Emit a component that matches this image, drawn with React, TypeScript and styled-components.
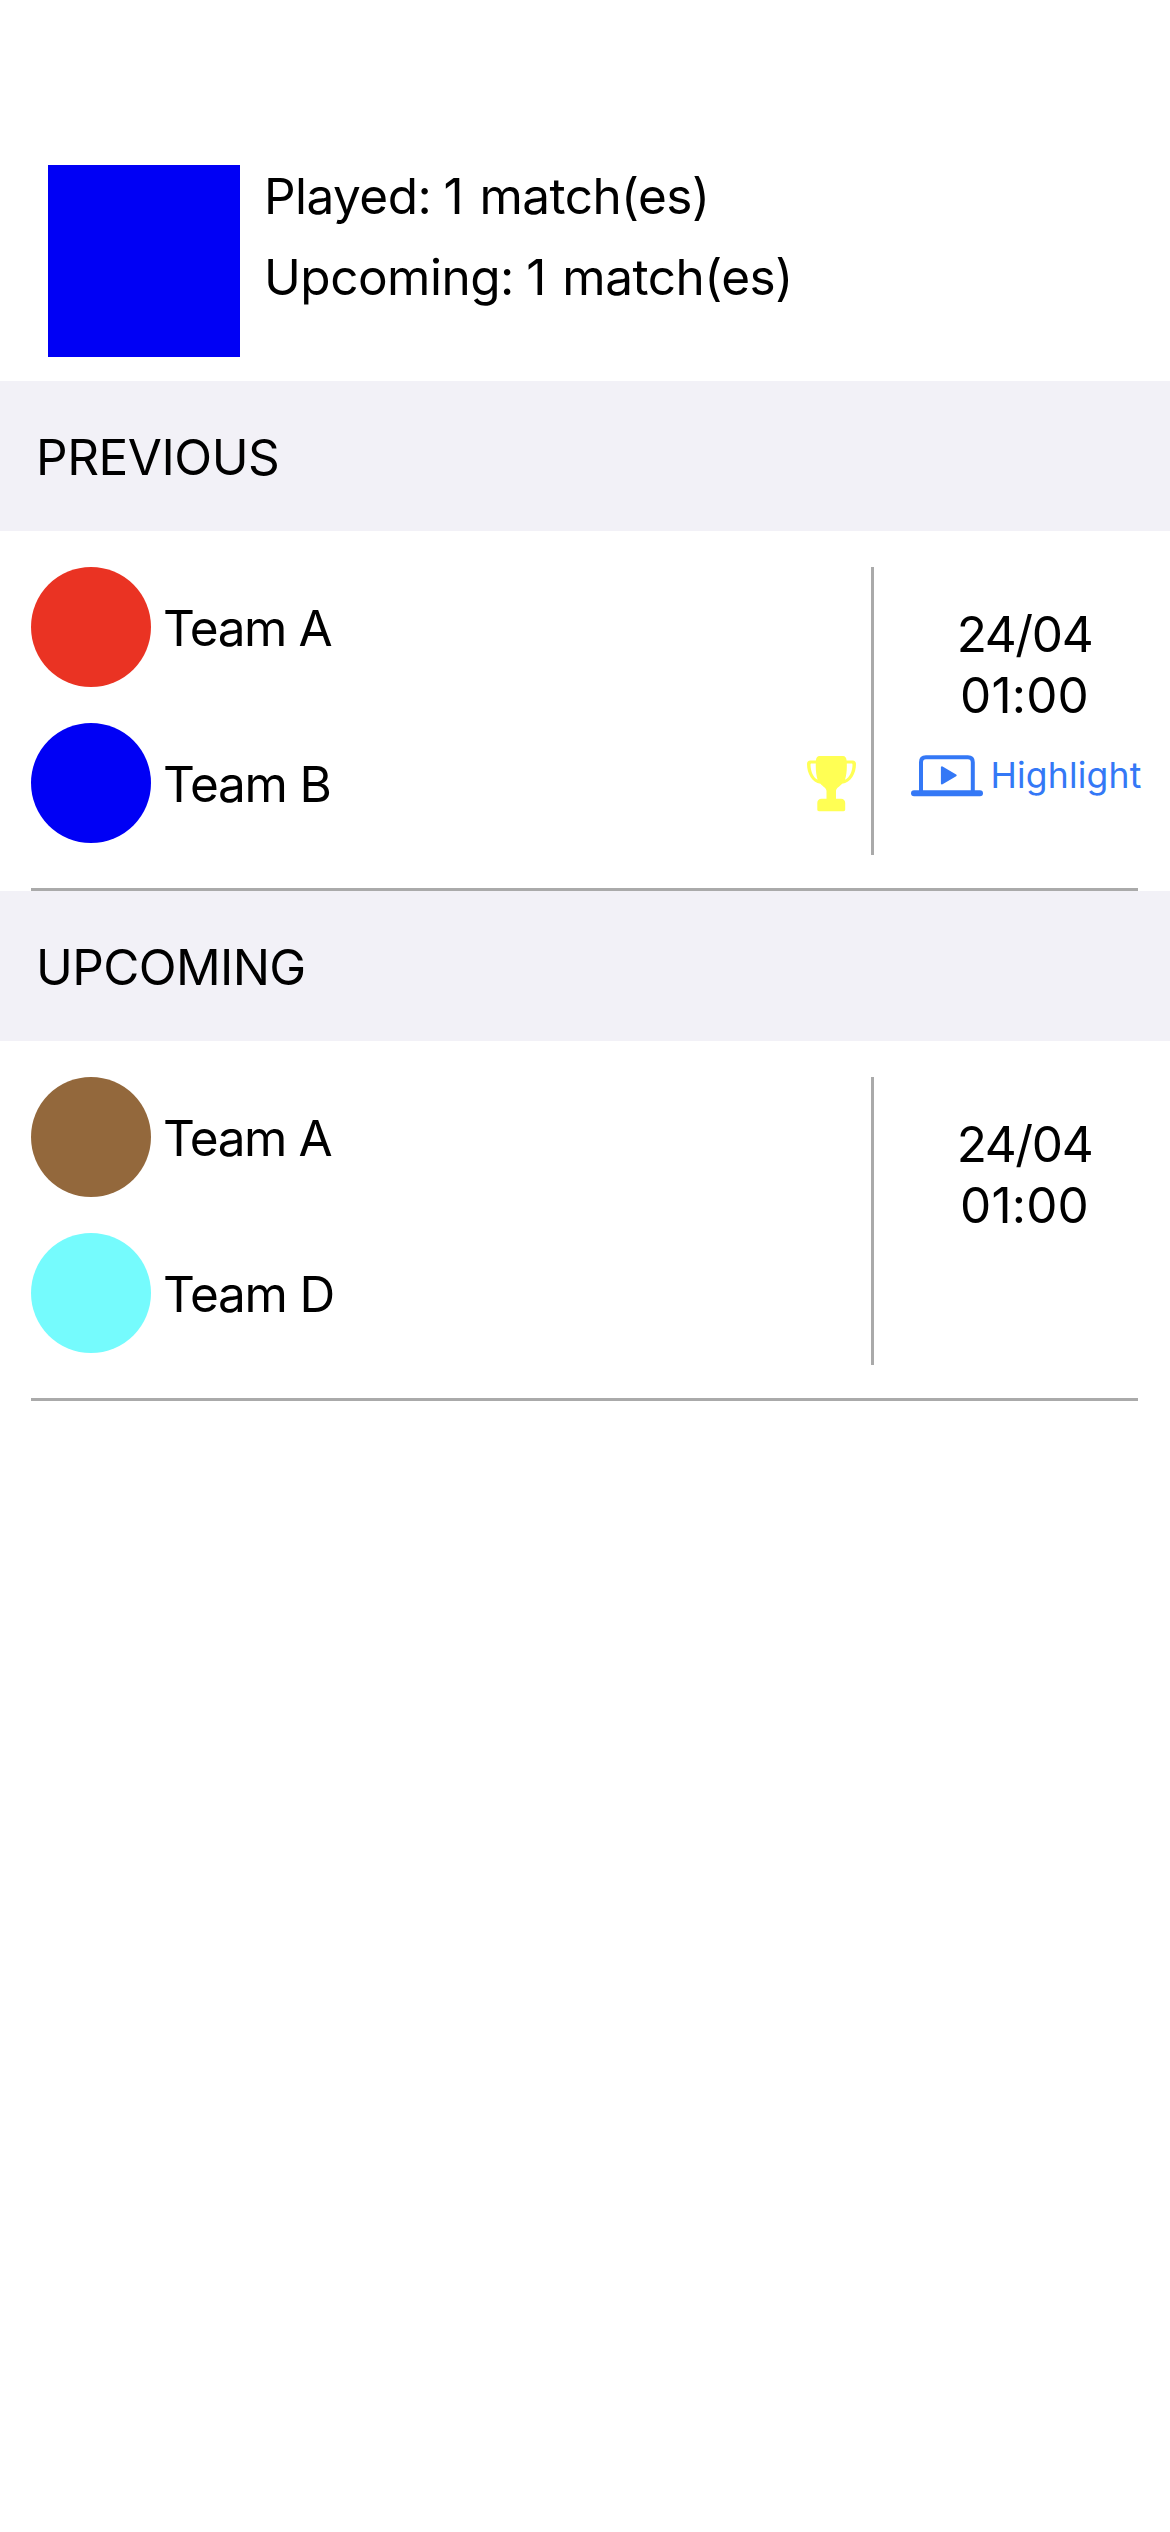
import React from "react";
import styled, { createGlobalStyle } from "styled-components";

const GlobalStyle = createGlobalStyle`
  *, *::before, *::after { box-sizing: border-box; }
  html, body { margin: 0; padding: 0; background: #ffffff; }
  body { font-family: Inter, "Liberation Sans", sans-serif; color: #000000; }
`;

const Screen = styled.main`
  display: flex;
  flex-direction: column;
  width: 1170px;
  min-height: 2532px;
  padding-top: 165px;
  background: #ffffff;
`;

const Label = styled.span<{ $tracking: number }>`
  display: block;
  font-size: 49.5px;
  line-height: 61px;
  letter-spacing: ${(p) => p.$tracking}px;
  white-space: nowrap;
`;

const Count = styled.span`
  margin: 0 3px 0 -1px;
`;

const Summary = styled.header`
  display: flex;
  gap: 24px;
  height: 216px;
  padding: 0 48px;
`;

const TeamSquare = styled.div`
  flex: none;
  width: 192px;
  height: 192px;
  background: #0000f5;
`;

const SummaryLines = styled.div`
  display: flex;
  flex-direction: column;
  gap: 20px;
  padding-top: 1px;
`;

const SectionHeader = styled.h2`
  display: flex;
  align-items: center;
  height: 150px;
  margin: 0;
  padding: 2px 36px 0;
  background: #f2f1f7;
  font-weight: 400;
`;

const MatchRow = styled.article`
  display: flex;
  height: 360px;
  margin: 0 32px 0 31px;
  padding-top: 36px;
  border-bottom: 3px solid #aaaaaa;
`;

const Teams = styled.div`
  display: flex;
  flex-direction: column;
  gap: 36px;
  flex: none;
  width: 840px;
`;

const TeamRow = styled.div`
  display: flex;
  align-items: center;
  height: 120px;
  padding-right: 12px;
`;

const Dot = styled.span<{ $color: string }>`
  flex: none;
  width: 120px;
  height: 120px;
  margin-right: 12px;
  border-radius: 50%;
  background: ${(p) => p.$color};
`;

const TeamName = styled.div`
  flex: 1;
  padding-top: 2px;
`;

const TrophySvg = styled.svg`
  flex: none;
  display: block;
  width: 64px;
  height: 66px;
  margin: 0 -5px 0 0;
`;

const Divider = styled.div`
  flex: none;
  width: 3px;
  height: 288px;
  background: #aaaaaa;
`;

const Info = styled.div`
  display: flex;
  flex-direction: column;
  align-items: center;
  flex: none;
  width: 301px;
  margin-right: -37px;
  padding-top: 37px;
`;

const HighlightLink = styled.a`
  display: flex;
  align-items: center;
  gap: 7px;
  height: 50px;
  margin-top: 25px;
  padding-left: 4px;
  color: #3478f6;
`;

const LaptopSvg = styled.svg`
  flex: none;
  display: block;
  width: 72px;
  height: 42px;
`;

const HighlightText = styled.span`
  font-size: 35.5px;
  line-height: 44px;
  letter-spacing: 0.2px;
`;

function Trophy() {
  return (
    <TrophySvg viewBox="0 0 64 66" fill="#ffff54" aria-label="Winner">
      <path
        fillRule="evenodd"
        d="M19.5 6H43C45.2 6 46.3 7.6 46.6 10.4H52.6C54.8 10.4 56 11.6 56 14C56 23.5 51 32.6 42 33.8C40 36.4 36 38 36 41V48.8H41C43.6 48.8 45.2 50.4 45.2 53V59.5C45.2 60.6 44.6 61.2 43.5 61.2H19C17.9 61.2 17.3 60.6 17.3 59.5V53C17.3 50.4 18.9 48.8 21.5 48.8H26.5V41C26.5 38 22.5 36.4 20.5 33.8C12 32.6 7 23.5 7 14C7 11.6 8.2 10.4 10.4 10.4H15.9C16.2 7.6 17.3 6 19.5 6ZM15.8 13.6H11.6C10.8 13.6 10.5 14 10.5 14.9C10.7 21.5 13.2 27.3 17.6 29.7C16.2 25.5 15.6 20 15.8 13.6ZM46.8 13.6C47 20 46.4 25.5 45 29.7C49.6 27.3 52.3 21.5 52.5 14.9C52.5 14 52.2 13.6 51.4 13.6Z"
      />
    </TrophySvg>
  );
}

function PlayLaptop() {
  return (
    <LaptopSvg viewBox="0 0 72 42" fill="currentColor" aria-hidden="true">
      <path
        d="M10 37V7.2Q10 2.3 14.9 2.3H56.9Q61.8 2.3 61.8 7.2V37"
        fill="none"
        stroke="currentColor"
        strokeWidth="4"
      />
      <rect x="0" y="35.2" width="72" height="6" rx="3" />
      <path
        d="M31 12.4V28.4L44.6 20.4Z"
        stroke="currentColor"
        strokeWidth="2.2"
        strokeLinejoin="round"
      />
    </LaptopSvg>
  );
}

type Team = { name: string; color: string; tracking: number; winner?: boolean };

function Match({ teams, highlight }: { teams: Team[]; highlight?: boolean }) {
  return (
    <MatchRow>
      <Teams>
        {teams.map((team) => (
          <TeamRow key={team.name}>
            <Dot $color={team.color} />
            <TeamName>
              <Label $tracking={team.tracking}>{team.name}</Label>
            </TeamName>
            {team.winner && <Trophy />}
          </TeamRow>
        ))}
      </Teams>
      <Divider />
      <Info>
        <Label $tracking={-1.4}>24/04</Label>
        <Label $tracking={0.16}>01:00</Label>
        {highlight && (
          <HighlightLink>
            <PlayLaptop />
            <HighlightText>Highlight</HighlightText>
          </HighlightLink>
        )}
      </Info>
    </MatchRow>
  );
}

export default function App() {
  return (
    <>
      <GlobalStyle />
      <Screen>
        <Summary>
          <TeamSquare />
          <SummaryLines>
            <Label $tracking={-0.55}>
              Played: <Count>1</Count> match(es)
            </Label>
            <Label $tracking={-0.5}>
              Upcoming: <Count>1</Count> match(es)
            </Label>
          </SummaryLines>
        </Summary>
        <section>
          <SectionHeader>
            <Label $tracking={-0.48}>PREVIOUS</Label>
          </SectionHeader>
          <Match
            highlight
            teams={[
              { name: "Team A", color: "#ea3323", tracking: -1.4 },
              { name: "Team B", color: "#0000f5", tracking: -1.2, winner: true },
            ]}
          />
        </section>
        <section>
          <SectionHeader>
            <Label $tracking={-0.64}>UPCOMING</Label>
          </SectionHeader>
          <Match
            teams={[
              { name: "Team A", color: "#93683c", tracking: -1.4 },
              { name: "Team D", color: "#75fbfd", tracking: -1.2 },
            ]}
          />
        </section>
      </Screen>
    </>
  );
}
